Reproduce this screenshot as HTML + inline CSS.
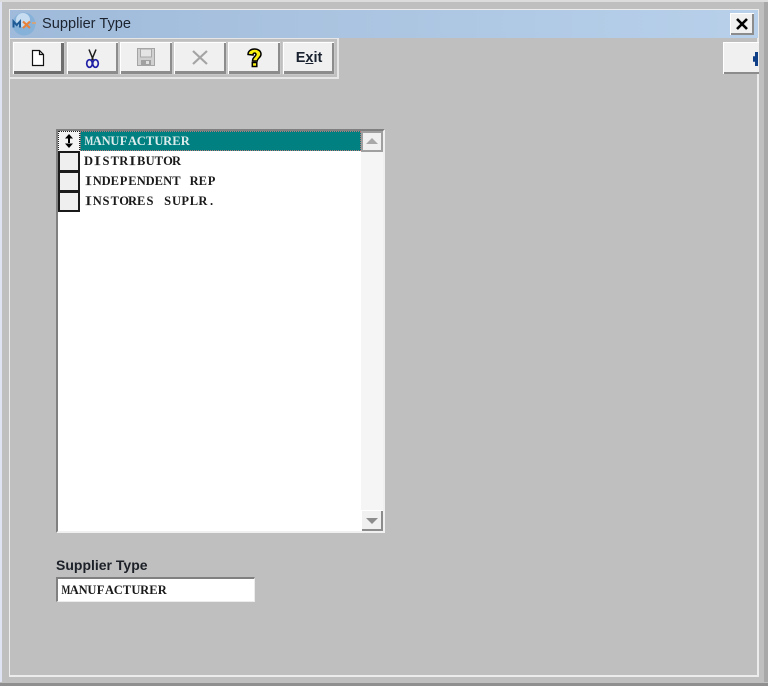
<!DOCTYPE html>
<html>
<head>
<meta charset="utf-8">
<style>
html,body{margin:0;padding:0;}
body{width:768px;height:686px;overflow:hidden;position:relative;background:#bfbfbf;font-family:"Liberation Sans",sans-serif;}
div,svg{position:absolute;box-sizing:border-box;}
#w{left:0;top:0;width:768px;height:686px;overflow:hidden;background:#bfbfbf;filter:blur(.35px);}
.btn{top:42px;height:32px;background:#f0f0f0;border-top:1px solid #fff;border-left:1px solid #fff;box-shadow:inset -2px -3px 0 #8c8c8c,0 0 0 1px #c8c8c8;}
.row{left:84px;font:bold 12.5px/20px "Liberation Serif",serif;color:#1a1a1a;height:20px;white-space:pre;}
.row i{display:inline-block;width:8.8px;text-align:center;font-style:normal;}
.row i.m{width:11.8px;margin:0 -1.5px;transform:scaleX(.75);}
.row i.n{font-weight:normal;transform:scaleX(1.7);-webkit-text-stroke:.15px #1a1a1a;}
.ind{left:58px;width:22px;height:21px;background:#efefef;border:2px solid #1a1a1a;}
</style>
</head>
<body>
<div id="w">
<div style="left:0;top:0;width:768px;height:2px;background:#dcdcdc"></div>
<div style="left:0;top:2px;width:2px;height:680px;background:#dfe3f2"></div>
<div style="left:764px;top:2px;width:4px;height:680px;background:#a8a8a8"></div>
<div style="left:0;top:683px;width:768px;height:3px;background:#8f8f8f"></div>

<div style="left:9px;top:9px;width:750px;height:668px;border:1px solid #ececec;border-width:1px 2px 2px 1px;background:#bfbfbf"></div>

<div style="left:10px;top:10px;width:748px;height:28px;background:linear-gradient(90deg,#9fbada 0%,#a9c3e0 40%,#b8d0ea 100%)"></div>

<svg style="left:12px;top:12px" width="26" height="25" viewBox="0 0 26 25">
<circle cx="12" cy="12" r="11.500" fill="#86b2da"/>
<circle cx="11" cy="8" r="7" fill="#c6dcf0"/>
<path d="M1.500 15.500V9.500l3.200 3.500L8 9.500v6" fill="none" stroke="#1e5a96" stroke-width="2"/>
<path d="M11 9.500l7 6.500M18 9.500L11 16" stroke="#e8823a" stroke-width="2.200"/>
<path d="M20 11h4" stroke="#e8a060" stroke-width="1.500"/>
</svg>
<div style="left:42px;top:14px;font-size:14.600px;line-height:20px;color:#1c2430;white-space:nowrap">Supplier Type</div>

<div style="left:730px;top:13px;width:24px;height:22px;background:#f0f0f0;border-top:1px solid #fff;border-left:1px solid #fff;box-shadow:inset -2px -2px 0 #8c8c8c"></div>
<svg style="left:735px;top:17px" width="14" height="14" viewBox="0 0 14 14"><path d="M2 2l10 10M12 2L2 12" stroke="#000" stroke-width="2.600"/></svg>

<div style="left:10px;top:38px;width:329px;height:41px;border-top:1px solid #e6e6e6;border-right:2px solid #e6e6e6;border-bottom:2px solid #e6e6e6;background:#bfbfbf"></div>

<div class="btn" style="left:13px;width:51px;box-shadow:inset -3px -3px 0 #6e6e6e,0 0 0 1px #c8c8c8"></div>
<svg style="left:30px;top:49px" width="16" height="18" viewBox="0 0 16 18"><path d="M2.500 1.500h7l4 4v11h-11zM9.500 1.500v4h4" fill="#fff" stroke="#111" stroke-width="1.200"/></svg>

<div class="btn" style="left:67px;width:51px"></div>
<svg style="left:84px;top:48px" width="17" height="21" viewBox="0 0 17 21"><path d="M5 1.500l4.500 11M12 1.500L7.500 12.500" stroke="#1c1c1c" stroke-width="1.500" fill="none"/><ellipse cx="5.500" cy="15.500" rx="2.800" ry="3.800" fill="none" stroke="#2222a8" stroke-width="1.700"/><ellipse cx="11.500" cy="15.500" rx="2.800" ry="3.800" fill="none" stroke="#2222a8" stroke-width="1.700"/></svg>

<div class="btn" style="left:120px;width:52px"></div>
<svg style="left:137px;top:48px" width="18" height="18" viewBox="0 0 18 18"><rect x=".5" y=".5" width="17" height="17" fill="#d0d0d0" stroke="#a4a4a4"/><rect x="3.500" y="1" width="11" height="8" fill="#e4e4e4" stroke="#a8a8a8"/><rect x="4" y="12" width="10" height="5" fill="#a0a0a0"/><rect x="9" y="13" width="3" height="3" fill="#dedede"/></svg>

<div class="btn" style="left:174px;width:52px"></div>
<svg style="left:191px;top:49px" width="18" height="17" viewBox="0 0 18 17"><path d="M2 2l14 13M16 2L2 15" stroke="#a4a4a4" stroke-width="2.200"/></svg>

<div class="btn" style="left:228px;width:52px"></div>
<svg style="left:246px;top:48px" width="17" height="20" viewBox="0 0 17 20"><path d="M2 6.500C2 3 5 1 8.500 1S15 3 15 6.200c0 3.300-3.500 3.800-3.800 6.800H6.500C6.500 9 10 8.500 10 6.500 10 4.500 7 4.500 7 7z" fill="#f7f010" stroke="#000" stroke-width="1.500"/><rect x="6.300" y="14.500" width="4.500" height="4" fill="#f7f010" stroke="#000" stroke-width="1.500"/></svg>

<div class="btn" style="left:283px;width:51px"></div>
<div style="left:284px;top:48px;width:50px;text-align:center;font-size:14.500px;font-weight:bold;line-height:20px;color:#1a2230">E<span style="text-decoration:underline">x</span>it</div>

<div style="left:723px;top:42px;width:36px;height:32px;background:#f0f0f0;border-top:1px solid #fff;border-left:1px solid #fff;box-shadow:inset 0 -2px 0 #8c8c8c"></div>
<div style="left:753px;top:52px;width:5px;height:14px;background:#0f3f86;clip-path:polygon(40% 0,100% 0,100% 100%,40% 100%,40% 70%,0 70%,0 30%,40% 30%)"></div>

<div style="left:56px;top:129px;width:329px;height:404px;background:#fff;border-top:2px solid #808080;border-left:2px solid #808080;border-right:2px solid #f0f0f0;border-bottom:2px solid #f0f0f0"></div>

<div style="left:80px;top:131px;width:281px;height:20px;background:#008080;outline:1px dotted #b87a7a;outline-offset:-1px"></div>
<div class="row" style="top:131px;color:#dcecec"><i class="m">M</i><i>A</i><i>N</i><i>U</i><i>F</i><i>A</i><i>C</i><i>T</i><i>U</i><i>R</i><i>E</i><i>R</i></div>
<div class="row" style="top:151px"><i>D</i><i class="n">I</i><i>S</i><i>T</i><i>R</i><i class="n">I</i><i>B</i><i>U</i><i>T</i><i>O</i><i>R</i></div>
<div class="row" style="top:171px"><i class="n">I</i><i>N</i><i>D</i><i>E</i><i>P</i><i>E</i><i>N</i><i>D</i><i>E</i><i>N</i><i>T</i><i>&nbsp;</i><i>R</i><i>E</i><i>P</i></div>
<div class="row" style="top:191px"><i class="n">I</i><i>N</i><i>S</i><i>T</i><i>O</i><i>R</i><i>E</i><i>S</i><i>&nbsp;</i><i>S</i><i>U</i><i>P</i><i>L</i><i>R</i><i>.</i></div>

<div class="ind" style="top:131px;border:1px dotted #222;background:#f4f4f4"></div>
<svg style="left:62px;top:133px" width="14" height="16" viewBox="0 0 14 16"><path d="M7 1l4 4.500H3zM7 15l4-4.500H3zM6 5h2v6H6z" fill="#000"/></svg>
<div class="ind" style="top:151px"></div>
<div class="ind" style="top:171px"></div>
<div class="ind" style="top:191px"></div>

<div style="left:361px;top:131px;width:22px;height:400px;background:#f5f5f5"></div>
<div style="left:361px;top:131px;width:22px;height:21px;background:#f0f0f0;border:2px solid #a0a0a0"></div>
<div style="left:366px;top:138px;width:0;height:0;border-left:6px solid transparent;border-right:6px solid transparent;border-bottom:6px solid #a8a8a8"></div>
<div style="left:361px;top:510px;width:22px;height:21px;background:#f0f0f0;border-top:1px solid #fff;border-left:1px solid #fff;box-shadow:inset -2px -2px 0 #8c8c8c"></div>
<div style="left:366px;top:518px;width:0;height:0;border-left:6px solid transparent;border-right:6px solid transparent;border-top:6px solid #8c8c8c"></div>

<div style="left:56px;top:556px;font-size:14px;font-weight:bold;line-height:18px;color:#1c2028;white-space:nowrap">Supplier Type</div>
<div style="left:56px;top:577px;width:199px;height:25px;background:#fff;border-top:2px solid #808080;border-left:2px solid #808080;border-right:1px solid #ececec;border-bottom:1px solid #ececec"></div>
<div class="row" style="left:61px;top:580px"><i class="m">M</i><i>A</i><i>N</i><i>U</i><i>F</i><i>A</i><i>C</i><i>T</i><i>U</i><i>R</i><i>E</i><i>R</i></div>
</div>
</body>
</html>
